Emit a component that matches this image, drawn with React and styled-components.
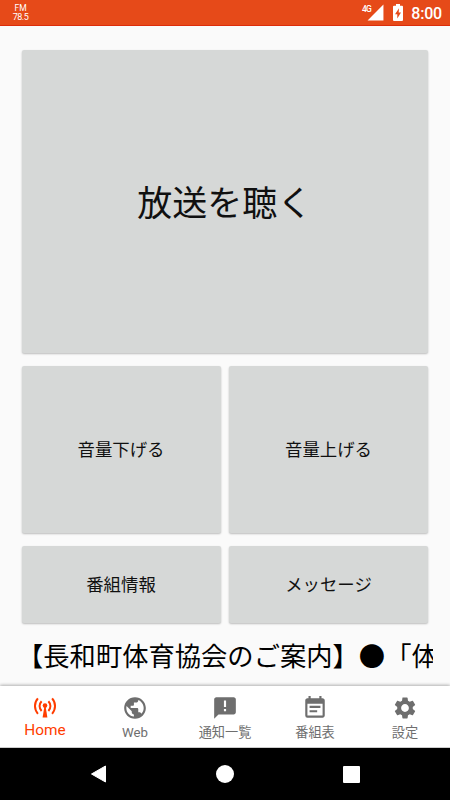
import React from "react";
import styled, { createGlobalStyle } from "styled-components";
import {
  MdPublic,
  MdAnnouncement,
  MdEventNote,
  MdSettings,
  MdSignalCellular4Bar,
} from "react-icons/md";

function AntennaIcon() {
  return (
    <svg viewBox="0 0 24 22" fill="none">
      <g stroke="currentColor" strokeWidth="2">
        <path d="M4.9 1.4C1 5.8 1 12.4 4.9 16.8" />
        <path d="M19.1 1.4c3.9 4.4 3.9 11 0 15.4" />
        <path d="M8.6 4.2c-2.7 2.8-2.7 7 0 9.8" />
        <path d="M15.4 4.2c2.7 2.8 2.7 7 0 9.8" />
      </g>
      <circle cx="12" cy="8.6" r="2.3" fill="currentColor" />
      <path d="M11.3 10h1.4l1.7 10.5H9.6z" fill="currentColor" />
    </svg>
  );
}

function BatteryIcon() {
  return (
    <Battery viewBox="0 0 10 17">
      <path d="M1 1.8h2V0h4v1.8h2q1 0 1 1V16q0 1-1 1H1q-1 0-1-1V2.8q0-1 1-1z" fill="#fff" />
      <path d="M6 4.3 2 10.2h2.3v4.3L8 8.6H5.7z" fill="#e64a19" />
    </Battery>
  );
}

const tabs = [
  { label: "Home", icon: <AntennaIcon />, active: true },
  { label: "Web", icon: <MdPublic /> },
  { label: "通知一覧", icon: <MdAnnouncement /> },
  { label: "番組表", icon: <MdEventNote /> },
  { label: "設定", icon: <MdSettings /> },
];

function App() {
  return (
    <Screen>
      <GlobalStyle />
      <StatusBar>
        <Station>
          <span>FM</span>
          <Frequency>78.5</Frequency>
        </Station>
        <StatusIcons>
          <Network>4G</Network>
          <MdSignalCellular4Bar size={19} />
          <BatteryIcon />
          <Clock>8:00</Clock>
        </StatusIcons>
      </StatusBar>

      <Controls>
        <PadButton $wide $size={35}>
          放送を聴く
        </PadButton>
        <PadButton>音量下げる</PadButton>
        <PadButton>音量上げる</PadButton>
        <PadButton>番組情報</PadButton>
        <PadButton>メッセージ</PadButton>
      </Controls>

      <Ticker>【長和町体育協会のご案内】●「体</Ticker>

      <TabBar>
        {tabs.map((tab) => (
          <Tab key={tab.label} $active={tab.active}>
            {tab.icon}
            <TabLabel $active={tab.active}>{tab.label}</TabLabel>
          </Tab>
        ))}
      </TabBar>

      <SystemBar>
        <svg width="18" height="20" viewBox="0 0 18 20">
          <path
            d="M1.5 10 15.5 2v16z"
            fill="#fff"
            stroke="#fff"
            strokeWidth="1"
            strokeLinejoin="round"
          />
        </svg>
        <HomeDot />
        <RecentSquare />
      </SystemBar>
    </Screen>
  );
}

export default App;

// ----------------- Styles section ---------------------

const GlobalStyle = createGlobalStyle`
  * {
    box-sizing: border-box;
  }

  body {
    margin: 0;
    font-family: Roboto, "Noto Sans CJK JP", sans-serif;
  }

  button {
    padding: 0;
    border: 0;
    font-family: inherit;
  }
`;

const Screen = styled.div`
  width: 450px;
  height: 800px;
  display: flex;
  flex-direction: column;
  overflow: hidden;
  background: #fafafa;
`;

const StatusBar = styled.header`
  height: 26px;
  flex: none;
  display: flex;
  justify-content: space-between;
  padding: 0 9px 0 12px;
  color: #fff;
  background: #e64a19;
  border-bottom: 1px solid #dd2c0a;
`;

const Station = styled.div`
  width: 17px;
  padding-top: 4px;
  display: flex;
  flex-direction: column;
  align-items: center;
  font-size: 8.5px;
  line-height: 9px;
  color: #fff;
`;

const Frequency = styled.span`
  font-size: 9px;
  letter-spacing: -0.5px;
`;

const StatusIcons = styled.div`
  display: flex;
  align-items: center;
`;

const Network = styled.span`
  align-self: flex-start;
  margin: 4px -5px 0 0;
  font-size: 8.5px;
  letter-spacing: -0.6px;
  line-height: 10px;
  font-weight: 500;
`;

const Battery = styled.svg`
  width: 10px;
  height: 17px;
  margin-left: 8px;
`;

const Clock = styled.span`
  margin: 0 -1px 0 8px;
  padding-top: 2px;
  font-size: 16px;
  font-weight: 500;
  letter-spacing: -0.2px;
  line-height: 26px;
`;

const Controls = styled.main`
  flex: none;
  margin: 24px 22px 0 21.5px;
  display: grid;
  grid-template-columns: 199px 199px;
  justify-content: space-between;
  grid-template-rows: 303px 167.5px 77.5px;
  row-gap: 12.7px;
`;

const PadButton = styled.button`
  grid-column: ${(props) => (props.$wide ? "span 2" : "auto")};
  padding-bottom: 2px;
  font-size: ${(props) => props.$size || 17.4}px;
  color: #101010;
  background: #d6d8d7;
  border-radius: 2px;
  box-shadow: 0 1px 2px rgba(0, 0, 0, 0.25);
`;

const Ticker = styled.div`
  height: 40px;
  margin: 13.6px 17px 0;
  overflow: hidden;
  white-space: nowrap;
  font-size: 26.3px;
  line-height: 40px;
  color: #000;
`;

const TabBar = styled.nav`
  height: 62px;
  flex: none;
  margin-top: auto;
  display: flex;
  background: #fff;
  border-bottom: 1px solid #ccc;
  box-shadow: 0 -1px 3px rgba(0, 0, 0, 0.3);
`;

const Tab = styled.button`
  flex: 1;
  display: flex;
  flex-direction: column;
  align-items: center;
  padding-top: ${(props) => (props.$active ? 11 : 9)}px;
  color: ${(props) => (props.$active ? "#ff3d00" : "#6e6e6e")};
  background: none;

  svg {
    flex: none;
    width: ${(props) => (props.$active ? 24 : 26)}px;
    height: ${(props) => (props.$active ? 22 : 26)}px;
  }
`;

const TabLabel = styled.span`
  margin-top: ${(props) => (props.$active ? 1 : 2)}px;
  font-size: ${(props) => (props.$active ? 15.4 : 13.2)}px;
  line-height: 20px;
`;

const SystemBar = styled.footer`
  height: 52px;
  flex: none;
  display: flex;
  justify-content: space-between;
  align-items: center;
  padding: 0 90px;
  background: #000;
`;

const HomeDot = styled.span`
  width: 18px;
  height: 18px;
  margin-right: 1px;
  border-radius: 50%;
  background: #fff;
`;

const RecentSquare = styled.span`
  width: 17px;
  height: 17px;
  border-radius: 1px;
  background: #fff;
`;
